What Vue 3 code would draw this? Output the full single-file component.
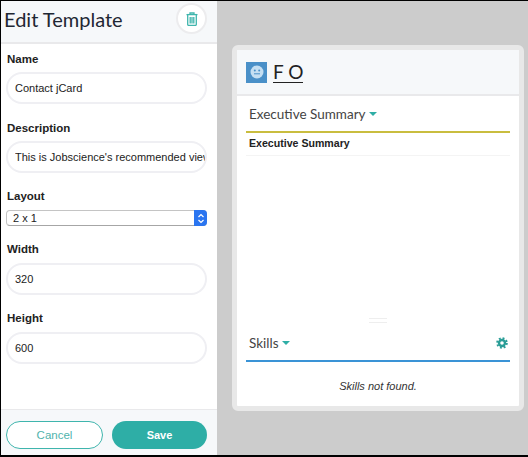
<template>
  <div class="frame">
    <aside class="editor">
      <header class="editor-head">
        <h1 class="editor-title">Edit Template</h1>
        <button class="trash-btn">
          <svg width="12" height="14" viewBox="0 0 12 14" fill="none" stroke="#3fb5ad" stroke-width="1.3">
            <path d="M0.500 2.600h11" />
            <path d="M4 2.400V1h4v1.400" />
            <path d="M1.700 3v9.400c0 .6.4 1 1 1h6.600c.6 0 1-.4 1-1V3" />
            <path d="M4.200 5v6.600M6 5v6.600M7.800 5v6.600" />
          </svg>
        </button>
      </header>

      <div class="editor-body">
        <div class="field">
          <label>Name</label>
          <input class="input" value="Contact jCard" readonly />
        </div>
        <div class="field">
          <label>Description</label>
          <input class="input" value="This is Jobscience's recommended view" readonly />
        </div>
        <div class="field field-low">
          <label>Layout</label>
          <div class="select">
            <span class="select-value">2 x 1</span>
            <span class="select-arrows">
              <svg width="8" height="11" viewBox="0 0 8 11" fill="none" stroke="#fff" stroke-width="1.2">
                <path d="M1.500 4L4 1.500 6.500 4" />
                <path d="M1.500 7L4 9.500 6.500 7" />
              </svg>
            </span>
          </div>
        </div>
        <div class="field field-low">
          <label>Width</label>
          <input class="input" value="320" readonly />
        </div>
        <div class="field field-low">
          <label>Height</label>
          <input class="input" value="600" readonly />
        </div>
      </div>

      <footer class="editor-foot">
        <button class="btn btn-cancel">Cancel</button>
        <button class="btn btn-save">Save</button>
      </footer>
    </aside>

    <main class="preview">
      <section class="card">
        <div class="card-head">
          <span class="avatar">
            <svg width="14" height="14" viewBox="0 0 14 14">
              <circle cx="7" cy="7" r="6.500" fill="#c5dff2" />
              <circle cx="4.800" cy="5.500" r="1" fill="#4a90c8" />
              <circle cx="9.200" cy="5.500" r="1" fill="#4a90c8" />
              <path d="M4 8.800h6" stroke="#4a90c8" stroke-width="1" />
            </svg>
          </span>
          <span class="card-name">F O</span>
        </div>

        <div class="card-body">
          <div class="tab tab-gold">
            <span class="tab-title">Executive Summary</span>
            <span class="caret"></span>
          </div>
          <div class="summary-row">Executive Summary</div>

          <div class="spacer">
            <span class="grip"></span>
          </div>

          <div class="tab tab-blue">
            <span class="tab-title">Skills</span>
            <span class="caret"></span>
            <svg class="gear" width="12" height="12" viewBox="0 0 12 12" fill="none" stroke="#2a9d97">
              <circle cx="6" cy="6" r="3" stroke-width="2.400" />
              <circle cx="6" cy="6" r="4.800" stroke-width="2" stroke-dasharray="1.885 1.885" />
            </svg>
          </div>
          <p class="empty">Skills not found.</p>
        </div>
      </section>
    </main>
  </div>
</template>

<script setup>
</script>

<style>
html,
body {
  margin: 0;
  background: #000;
}
</style>

<style scoped>
.frame {
  width: 527px;
  height: 454px;
  margin: 1px 0 2px 1px;
  display: flex;
  font-family: "Liberation Sans", Arial, sans-serif;
  background: #ccc;
  overflow: hidden;
}

.editor {
  width: 216px;
  flex: none;
  display: flex;
  flex-direction: column;
  background: #fff;
}

.editor-head {
  height: 35px;
  flex: none;
  display: flex;
  align-items: center;
  justify-content: space-between;
  padding: 0 10px 6px 3px;
  background: #f6f8fa;
  border-bottom: 2px solid #e9e9eb;
}

.editor-title {
  margin: 0;
  font-family: Lato, sans-serif;
  font-size: 20px;
  font-weight: 400;
  color: #1f2733;
}

.trash-btn {
  width: 31px;
  height: 31px;
  padding: 0;
  display: flex;
  align-items: center;
  justify-content: center;
  background: #fff;
  border: 2px solid #ececee;
  border-radius: 50%;
}

.editor-body {
  flex: 1;
  padding: 8px 10px 0 5px;
}

.field {
  margin-bottom: 17px;
}

.field label {
  display: block;
  margin-bottom: 6px;
  padding-left: 1px;
  font-size: 11.500px;
  font-weight: 700;
  line-height: 14px;
  color: #222;
}

.field-low {
  margin-top: -1px;
}

.field-low label {
  margin-bottom: 7px;
}

.input {
  display: block;
  width: 100%;
  height: 32px;
  padding: 0 0 0 7px;
  box-sizing: border-box;
  font-family: "Liberation Sans", Arial, sans-serif;
  font-size: 11px;
  color: #222;
  background: #fff;
  border: 2px solid #efeff3;
  border-radius: 16px;
  outline: none;
}

.select {
  height: 16px;
  display: flex;
  align-items: center;
  justify-content: space-between;
  box-sizing: border-box;
  border: 1px solid #c4c4c4;
  border-bottom-color: #a6a6a6;
  border-radius: 4px;
  background: #fff;
}

.select-value {
  padding-left: 6px;
  font-size: 11px;
  color: #222;
}

.select-arrows {
  width: 13px;
  height: 16px;
  margin: -1px;
  display: flex;
  align-items: center;
  justify-content: center;
  background: #2a75f0;
  border-radius: 0 4px 4px 0;
}

.editor-foot {
  height: 39px;
  flex: none;
  display: flex;
  align-items: flex-end;
  gap: 9px;
  padding: 0 10px 6px 5px;
  background: #f6f8fa;
  border-top: 1px solid #e9e9eb;
}

.btn {
  flex: 1;
  height: 28px;
  padding: 0;
  font-family: "Liberation Sans", Arial, sans-serif;
  border-radius: 14px;
  box-sizing: border-box;
}

.btn-cancel {
  font-size: 11.500px;
  color: #4fb3ac;
  background: #fff;
  border: 1px solid #3fb5ad;
}

.btn-save {
  font-size: 11px;
  font-weight: 700;
  color: #fff;
  background: #2eaea6;
  border: 0;
}

.preview {
  flex: 1;
  padding: 44px 4px 0 15px;
}

.card {
  height: 366px;
  display: flex;
  flex-direction: column;
  box-sizing: border-box;
  border: 5px solid #e8e8e8;
  border-radius: 6px;
  background: #fff;
}

.card-head {
  height: 44px;
  flex: none;
  display: flex;
  align-items: center;
  gap: 6px;
  padding: 0 9px;
  background: #f6f8fa;
  border-bottom: 2px solid #e9e9eb;
}

.avatar {
  width: 21px;
  height: 21px;
  display: flex;
  align-items: center;
  justify-content: center;
  background: #4a90c8;
}

.card-name {
  font-family: Lato, sans-serif;
  font-size: 19px;
  line-height: 20px;
  color: #222;
  border-bottom: 1px solid #222;
}

.card-body {
  flex: 1;
  display: flex;
  flex-direction: column;
  padding: 0 9px;
}

.tab {
  height: 34px;
  flex: none;
  display: flex;
  align-items: center;
  gap: 3px;
  padding: 0 3px;
}

.tab-gold {
  height: 35px;
  border-bottom: 2px solid #c9bd3f;
}

.tab-blue {
  border-bottom: 2px solid #3a93d6;
}

.tab-title {
  font-family: Lato, sans-serif;
  font-size: 13.500px;
  color: #444;
}

.caret {
  width: 0;
  height: 0;
  border-left: 4px solid transparent;
  border-right: 4px solid transparent;
  border-top: 4px solid #2eaea6;
}

.gear {
  margin-left: auto;
  margin-right: -1px;
}

.summary-row {
  padding: 3px 0 5px 3px;
  font-size: 10.600px;
  font-weight: 700;
  line-height: 14px;
  color: #222;
  border-bottom: 1px solid #f4f4f4;
}

.spacer {
  flex: 1;
  display: flex;
  align-items: flex-end;
  justify-content: center;
}

.grip {
  width: 18px;
  height: 2px;
  margin-bottom: 3px;
  border-top: 1px solid #eeeeee;
  border-bottom: 1px solid #eeeeee;
  padding: 1px 0 0;
}

.empty {
  margin: 0;
  padding: 17px 0 13px;
  font-size: 11px;
  font-style: italic;
  line-height: 14px;
  text-align: center;
  color: #333;
}
</style>
